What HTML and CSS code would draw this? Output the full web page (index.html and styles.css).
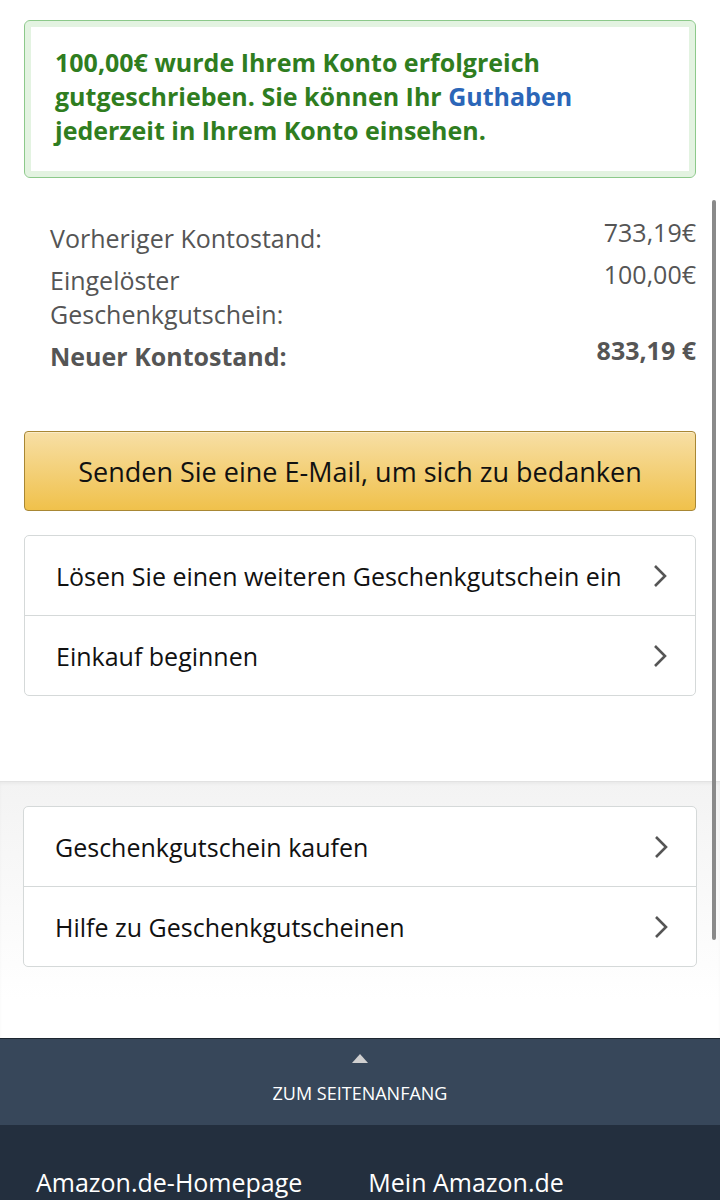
FILE: index.html
```html
<!DOCTYPE html>
<html lang="de">
<head>
    <meta charset="UTF-8">
    <meta name="viewport" content="width=device-width, initial-scale=1.0">
    <title>Geschenkgutschein einlösen</title>
    <link rel="stylesheet" href="styles.css">
</head>
<body>
    <div class="page">
        <div class="alert">
            100,00€ wurde Ihrem Konto erfolgreich<br>
            gutgeschrieben. Sie können Ihr <a href="#">Guthaben</a><br>
            jederzeit in Ihrem Konto einsehen.
        </div>

        <div class="balance">
            <div class="row">
                <span class="label">Vorheriger Kontostand:</span>
                <span class="value">733,19€</span>
            </div>
            <div class="row">
                <span class="label">Eingelöster<br>Geschenkgutschein:</span>
                <span class="value">100,00€</span>
            </div>
            <div class="row total">
                <span class="label">Neuer Kontostand:</span>
                <span class="value">833,19 €</span>
            </div>
        </div>

        <button class="btn-primary">Senden Sie eine E-Mail, um sich zu bedanken</button>

        <ul class="link-list">
            <li><a href="#">Lösen Sie einen weiteren Geschenkgutschein ein <svg class="chevron" viewBox="0 0 14 24"><path d="M2 2 L12 12 L2 22"/></svg></a></li>
            <li><a href="#">Einkauf beginnen <svg class="chevron" viewBox="0 0 14 24"><path d="M2 2 L12 12 L2 22"/></svg></a></li>
        </ul>
    </div>

    <div class="more">
        <ul class="link-list">
            <li><a href="#">Geschenkgutschein kaufen <svg class="chevron" viewBox="0 0 14 24"><path d="M2 2 L12 12 L2 22"/></svg></a></li>
            <li><a href="#">Hilfe zu Geschenkgutscheinen <svg class="chevron" viewBox="0 0 14 24"><path d="M2 2 L12 12 L2 22"/></svg></a></li>
        </ul>
    </div>

    <footer>
        <a class="to-top" href="#">
            <span class="arrow"></span>
            ZUM SEITENANFANG
        </a>
        <div class="footer-links">
            <a href="#">Amazon.de-Homepage</a>
            <a href="#">Mein Amazon.de</a>
        </div>
    </footer>

    <div class="scrollbar"></div>
</body>
</html>
```

FILE: styles.css
```css
body {
    font-family: "Open Sans", "Liberation Sans", sans-serif;
    margin: 0;
    padding: 0;
    background: white;
    color: #111;
    position: relative;
    overflow: hidden;
}
.page {
    padding: 20px 24px 85px;
}
.alert {
    border: 1px solid #8cc98a;
    border-radius: 6px;
    box-shadow: inset 0 0 0 6px #e3f3e1;
    padding: 24px 30px 30px;
    font-size: 25px;
    line-height: 34px;
    font-weight: bold;
    color: #2f7d20;
}
.alert a {
    color: #2b66b8;
    text-decoration: none;
}
.balance {
    margin-top: 43px;
    padding-left: 26px;
    color: #555;
    font-size: 25px;
}
.row {
    display: flex;
    justify-content: space-between;
    align-items: flex-start;
    margin-bottom: 8px;
}
.label {
    line-height: 34px;
}
.value {
    line-height: 22px;
}
.total {
    font-weight: bold;
}
.btn-primary {
    display: block;
    width: 100%;
    height: 80px;
    margin-top: 58px;
    font-family: inherit;
    font-size: 27px;
    color: #111;
    border: 1px solid #a88734;
    border-radius: 4px;
    background: linear-gradient(to bottom, #f7dfa5, #f0c14b);
    box-shadow: inset 0 1px 0 rgba(255, 255, 255, 0.4);
}
.link-list {
    list-style: none;
    margin: 24px 0 0;
    padding: 0;
    border: 1px solid #d5d9d9;
    border-radius: 5px;
    background: white;
}
.link-list li + li {
    border-top: 1px solid #d5d9d9;
}
.link-list a {
    display: flex;
    justify-content: space-between;
    align-items: center;
    height: 79px;
    padding: 0 28px 0 31px;
    font-size: 25px;
    color: #111;
    text-decoration: none;
}
.chevron {
    width: 14px;
    height: 24px;
    flex-shrink: 0;
    fill: none;
    stroke: #555;
    stroke-width: 2.6;
}
.more {
    border-top: 1px solid #e2e2e2;
    background: linear-gradient(to bottom, #f3f3f3, #fff 85%);
    padding: 0 23px 71px;
    box-shadow: inset 0 2px 3px rgba(0, 0, 0, 0.04);
}
footer {
    border-top: 1px solid #1d2630;
}
.to-top {
    display: flex;
    flex-direction: column;
    align-items: center;
    background: #37475a;
    color: white;
    text-decoration: none;
    font-size: 18px;
    line-height: 24px;
    padding: 15px 0 20px;
    gap: 18px;
}
.arrow {
    width: 0;
    height: 0;
    border-left: 8px solid transparent;
    border-right: 8px solid transparent;
    border-bottom: 9px solid #d0d0d0;
}
.footer-links {
    background: #232f3e;
    padding: 42px 36px 20px;
    display: flex;
    gap: 66px;
}
.footer-links a {
    color: white;
    text-decoration: none;
    font-size: 25px;
    line-height: 30px;
}
.scrollbar {
    position: absolute;
    right: 4px;
    top: 200px;
    width: 4px;
    height: 740px;
    border-radius: 2px;
    background: #8a8a8a;
}
```
